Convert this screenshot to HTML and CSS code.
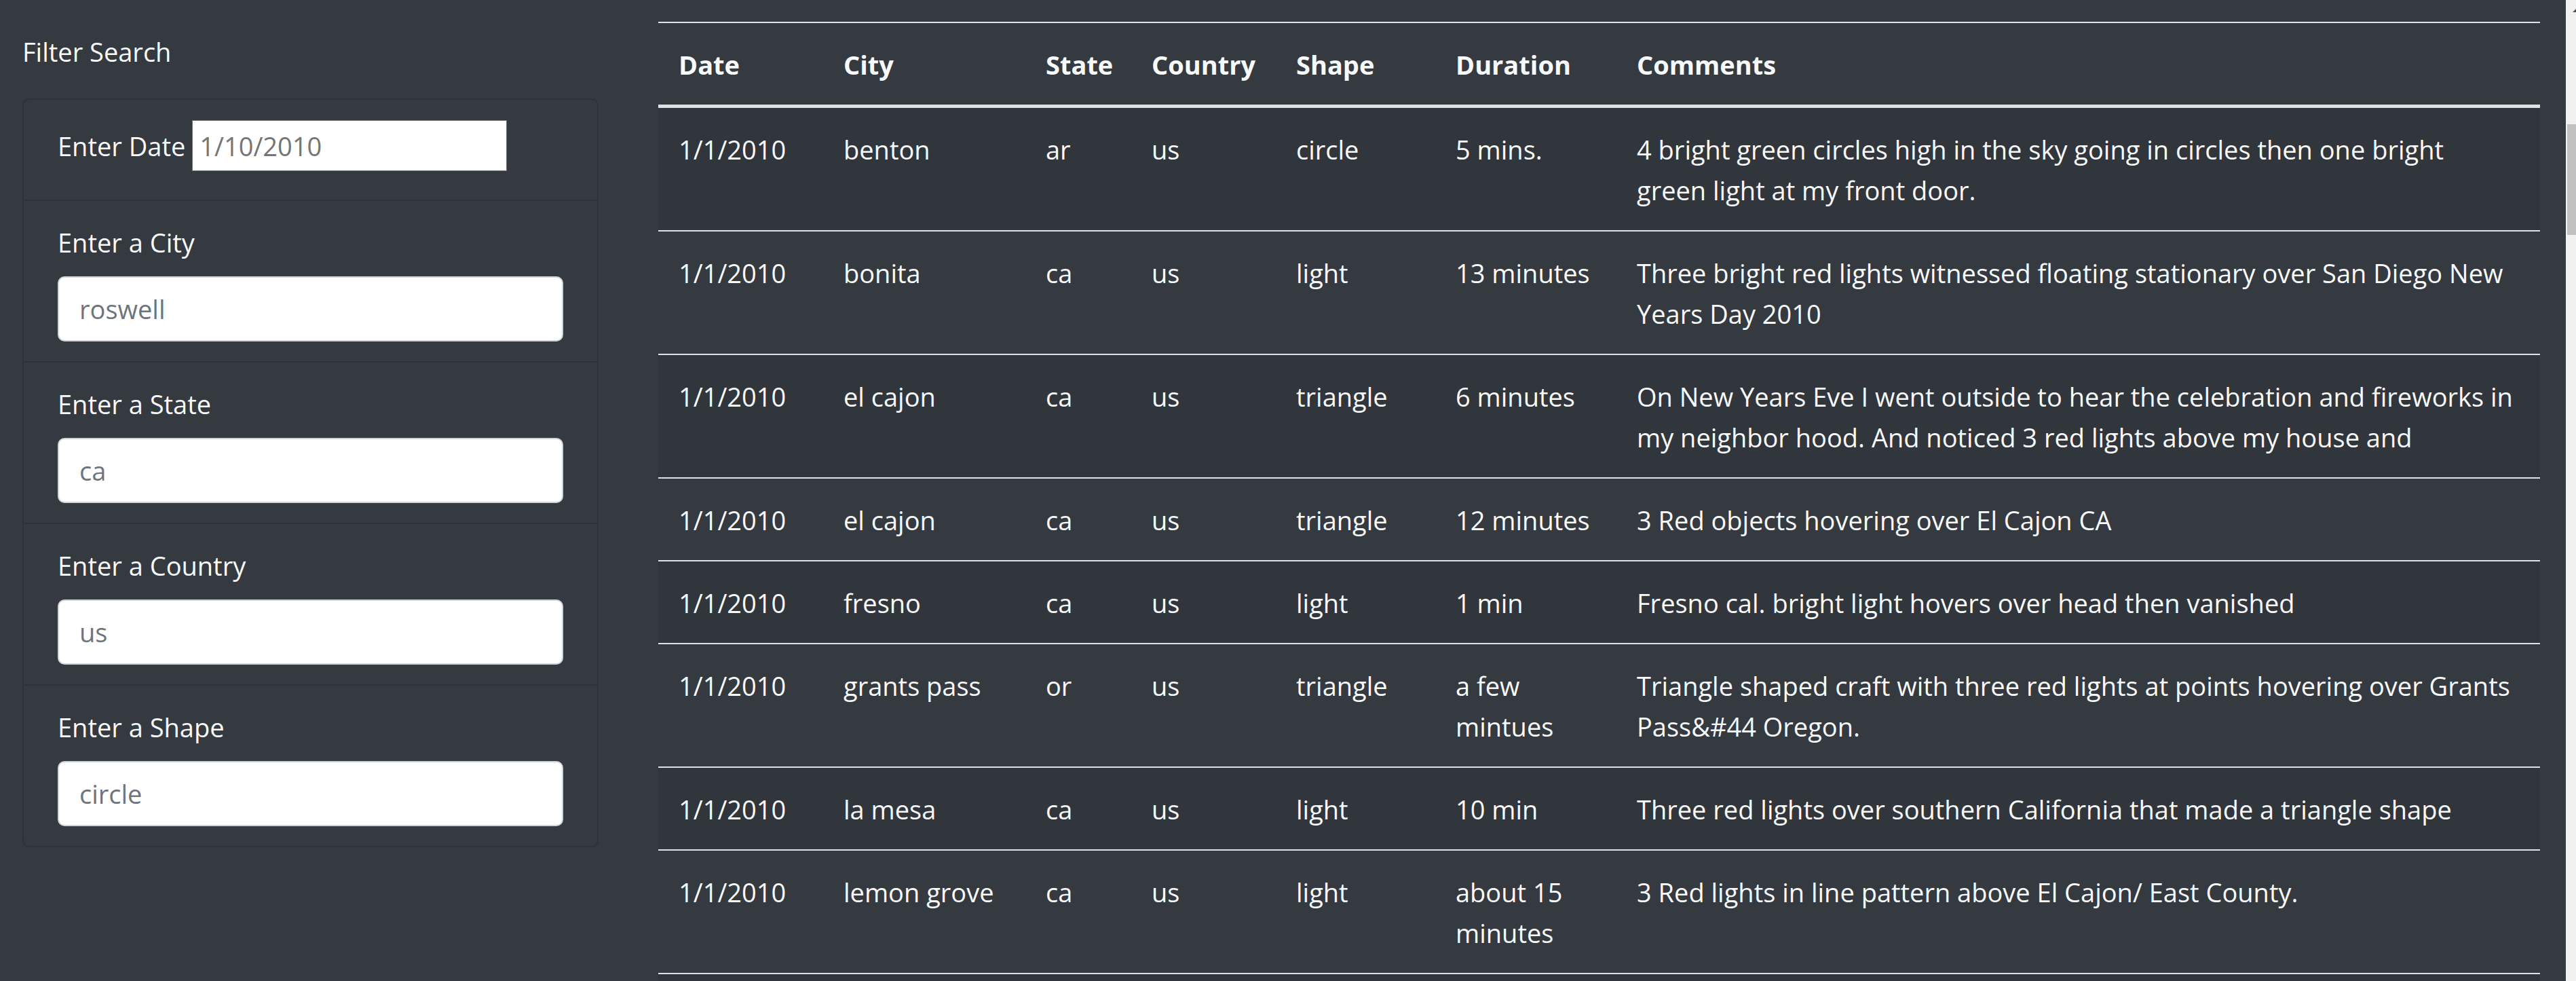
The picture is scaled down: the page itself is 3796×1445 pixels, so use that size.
FILE: index.html
```html
<!DOCTYPE html>
<html lang="en">
<head>
<meta charset="utf-8">
<title>UFO Sightings</title>
<link rel="stylesheet" href="styles.css">
</head>
<body>
<div class="page">
  <aside class="sidebar">
    <form>
      <p class="filter-title">Filter Search</p>
      <ul class="filters">
        <li class="filter filter-inline">
          <label for="datetime">Enter Date</label>
          <input class="date-input" id="datetime" type="text" placeholder="1/10/2010">
        </li>
        <li class="filter">
          <label for="city">Enter a City</label>
          <input class="form-control" id="city" type="text" placeholder="roswell">
        </li>
        <li class="filter">
          <label for="state">Enter a State</label>
          <input class="form-control" id="state" type="text" placeholder="ca">
        </li>
        <li class="filter">
          <label for="country">Enter a Country</label>
          <input class="form-control" id="country" type="text" placeholder="us">
        </li>
        <li class="filter">
          <label for="shape">Enter a Shape</label>
          <input class="form-control" id="shape" type="text" placeholder="circle">
        </li>
      </ul>
    </form>
  </aside>
  <main class="results">
    <table class="sightings">
      <colgroup>
        <col class="col-date"><col class="col-city"><col class="col-state"><col class="col-country"><col class="col-shape"><col class="col-duration"><col>
      </colgroup>
      <thead>
        <tr><th>Date</th><th>City</th><th>State</th><th>Country</th><th>Shape</th><th>Duration</th><th>Comments</th></tr>
      </thead>
      <tbody>
        <tr><td>1/1/2010</td><td>benton</td><td>ar</td><td>us</td><td>circle</td><td>5 mins.</td><td>4 bright green circles high in the sky going in circles then one bright green light at my front door.</td></tr>
        <tr><td>1/1/2010</td><td>bonita</td><td>ca</td><td>us</td><td>light</td><td>13 minutes</td><td>Three bright red lights witnessed floating stationary over San Diego New Years Day 2010</td></tr>
        <tr><td>1/1/2010</td><td>el cajon</td><td>ca</td><td>us</td><td>triangle</td><td>6 minutes</td><td>On New Years Eve I went outside to hear the celebration and fireworks in my neighbor hood. And noticed 3 red lights above my house and</td></tr>
        <tr><td>1/1/2010</td><td>el cajon</td><td>ca</td><td>us</td><td>triangle</td><td>12 minutes</td><td>3 Red objects hovering over El Cajon CA</td></tr>
        <tr><td>1/1/2010</td><td>fresno</td><td>ca</td><td>us</td><td>light</td><td>1 min</td><td>Fresno cal. bright light hovers over head then vanished</td></tr>
        <tr><td>1/1/2010</td><td>grants pass</td><td>or</td><td>us</td><td>triangle</td><td>a few mintues</td><td>Triangle shaped craft with three red lights at points hovering over Grants Pass&amp;#44 Oregon.</td></tr>
        <tr><td>1/1/2010</td><td>la mesa</td><td>ca</td><td>us</td><td>light</td><td>10 min</td><td>Three red lights over southern California that made a triangle shape</td></tr>
        <tr><td>1/1/2010</td><td>lemon grove</td><td>ca</td><td>us</td><td>light</td><td>about 15 minutes</td><td>3 Red lights in line pattern above El Cajon/ East County.</td></tr>
        <tr><td></td><td></td><td></td><td></td><td></td><td></td><td></td></tr>
      </tbody>
    </table>
  </main>
  <div class="scrollbar" aria-hidden="true">
    <svg class="scroll-arrow" width="15" height="20" viewBox="0 0 15 20"><path d="M10 18 L20 8 L30 18 Z" fill="#505050"/></svg>
    <div class="scroll-thumb"></div>
  </div>
</div>
</body>
</html>
```
FILE: styles.css
```css
* { box-sizing: border-box; }
body {
  margin: 0;
  background: #343a40;
  color: #f8f9fa;
  font-family: "Segoe UI", "Open Sans", "Noto Sans", sans-serif;
  font-size: 38px;
  line-height: 60px;
}
.page {
  display: flex;
  height: 100vh;
  overflow: hidden;
}
.sidebar {
  flex: 0 0 25%;
  padding: 46px 67px 0 33px;
}
.filter-title { margin: 0 0 39px; }
.filters {
  margin: 0;
  padding: 0;
  list-style: none;
  border: 2px solid #2e3338;
  border-radius: 10px;
}
.filter {
  padding: 31px 50px 29px;
}
.filter + .filter { border-top: 2px solid #2e3338; }
.filter label { display: block; margin-bottom: 20px; }
.filter-inline {
  display: flex;
  align-items: center;
  gap: 10px;
  padding-top: 30px;
  padding-bottom: 42px;
}
.filter-inline label { margin: 0; white-space: nowrap; }
input {
  display: block;
  font: inherit;
  background: #fff;
  color: #495057;
}
.date-input {
  width: 464px;
  height: 75px;
  padding: 2px 10px;
  border: 1px solid #767676;
  border-radius: 0;
}
.date-input::placeholder { color: #757575; }
.form-control {
  width: 100%;
  height: 96px;
  padding: 15px 30px;
  border: 2px solid #ced4da;
  border-radius: 10px;
}
.form-control::placeholder { color: #6c757d; opacity: 1; }
.results {
  flex: 1;
  min-width: 0;
  padding: 32px 38px 0 21px;
}
.sightings {
  width: 100%;
  table-layout: fixed;
  border-collapse: separate;
  border-spacing: 0;
}
.col-date { width: 243px; }
.col-city { width: 298px; }
.col-state { width: 156px; }
.col-country { width: 213px; }
.col-shape { width: 235px; }
.col-duration { width: 267px; }
th, td {
  padding: 31px 30px 29px;
  text-align: left;
  vertical-align: top;
  border-top: 2px solid #dee2e6;
}
th {
  padding-right: 0;
  border-bottom: 5px solid #dee2e6;
}
td:last-child { padding-right: 36px; }
tbody tr:first-child td { border-top: 0; }
tbody tr:nth-child(odd) { background: #31363c; }
.scrollbar {
  flex: 0 0 15px;
  background: #f1f1f1;
}
.scroll-arrow { display: block; }
.scroll-thumb {
  height: 163px;
  margin: 163px 0 0 2px;
  background: #c1c1c1;
}
```
